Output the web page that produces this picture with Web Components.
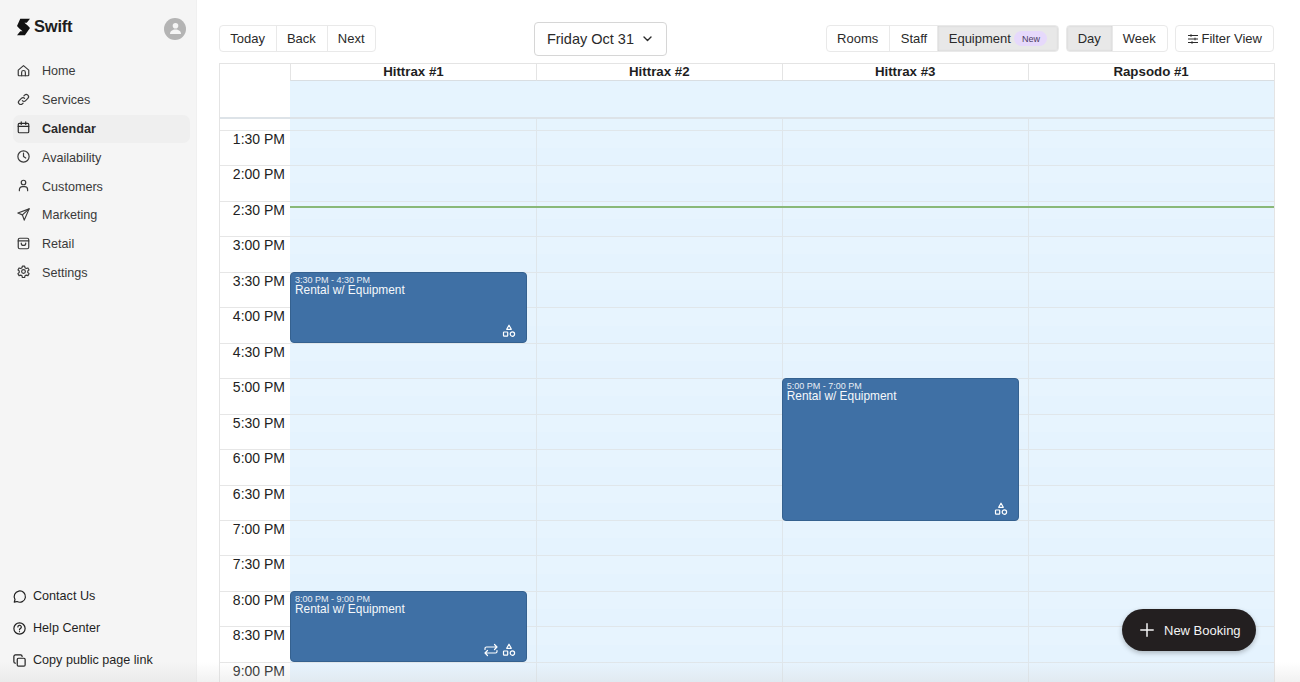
<!DOCTYPE html>
<html lang="en">
<head>
<meta charset="UTF-8">
<title>Swift Calendar</title>
<style>
html, body { margin: 0; height: 100%; overflow: hidden; background: #fff; }
body { font-family: "Liberation Sans", Arial, sans-serif; color: #222; }
</style>
</head>
<body>

<app-shell>
  <side-bar slot="side"></side-bar>
  <cal-toolbar slot="main"></cal-toolbar>
  <cal-grid slot="main"></cal-grid>
  <new-booking slot="fab"></new-booking>
</app-shell>

<script>
const stroke = 'fill="none" stroke="currentColor" stroke-width="1.6" stroke-linecap="round" stroke-linejoin="round"'

const navIcons = {
  home: `<path d="M3 9.5 10 3.5l7 6V16a1 1 0 0 1-1 1H4a1 1 0 0 1-1-1z"/><path d="M7.5 17v-4.5a2.5 2.5 0 0 1 5 0V17"/>`,
  link: `<path d="M8.5 11.5a3 3 0 0 0 4.3 0l3-3a3 3 0 0 0-4.3-4.3l-1 1"/><path d="M11.5 8.5a3 3 0 0 0-4.3 0l-3 3a3 3 0 0 0 4.3 4.3l1-1"/>`,
  calendar: `<rect x="3" y="4.5" width="14" height="12.5" rx="1.5"/><path d="M3 8.5h14M7 2.5v3.5M13 2.5v3.5"/>`,
  clock: `<circle cx="10" cy="10" r="7.5"/><path d="M10 5.5V10l3 2"/>`,
  person: `<circle cx="10" cy="6" r="3"/><path d="M4.5 17v-1.5a4 4 0 0 1 4-4h3a4 4 0 0 1 4 4V17"/>`,
  send: `<path d="M17.5 2.5 2.5 8l6 2.5 2.5 7z"/><path d="M17.5 2.5 8.5 10.5"/>`,
  bag: `<rect x="3" y="3" width="14" height="14" rx="2"/><path d="M3 6.5h14M7 9.5a3 3 0 0 0 6 0"/>`,
  gear: `<circle cx="10" cy="10" r="2.5"/><path d="M8.5 2.8h3l.5 2.2 1.7 1 2.2-.7 1.5 2.6-1.7 1.5v2l1.7 1.5-1.5 2.6-2.2-.7-1.7 1-.5 2.2h-3l-.5-2.2-1.7-1-2.2.7-1.5-2.6 1.7-1.5v-2L2.6 7.9l1.5-2.6 2.2.7 1.7-1z"/>`,
  chat: `<path d="M3 17.5l1-3.5a7.5 7.5 0 1 1 2.8 2.7z"/>`,
  help: `<circle cx="10" cy="10" r="7.5"/><path d="M7.8 8a2.3 2.3 0 1 1 3.4 2c-.8.5-1.2 1-1.2 1.8"/><path d="M10 14.2v.1"/>`,
  copy: `<rect x="7" y="7" width="10.5" height="10.5" rx="1.5"/><path d="M4.5 13.5A2 2 0 0 1 2.5 11.5V4.5a2 2 0 0 1 2-2h7a2 2 0 0 1 2 2"/>`
}

function icon(name, size) {
  return `<svg width="${size}" height="${size}" viewBox="0 0 20 20" ${stroke}>${navIcons[name]}</svg>`
}

class AppShell extends HTMLElement {
  constructor() {
    super()
    this.attachShadow({ mode: "open" })
    this.shadowRoot.innerHTML = `
      <style>
        :host { display: grid; grid-template-columns: 197px 1fr; height: 682px; position: relative; overflow: hidden; }
        main { padding: 22px 26px 0 22px; min-width: 0; overflow: hidden; }
        .fab { position: absolute; right: 44px; bottom: 31px; }
        .fade { position: absolute; left: 0; right: 0; bottom: 0; height: 20px; pointer-events: none;
                background: linear-gradient(rgba(225,225,225,0), rgba(215,215,215,.35)); }
      </style>
      <slot name="side"></slot>
      <main><slot name="main"></slot></main>
      <div class="fade"></div>
      <div class="fab"><slot name="fab"></slot></div>
    `
  }
}

class SideBar extends HTMLElement {
  constructor() {
    super()
    this.attachShadow({ mode: "open" })
    const items = [["home", "Home"], ["link", "Services"], ["calendar", "Calendar", true], ["clock", "Availability"],
      ["person", "Customers"], ["send", "Marketing"], ["bag", "Retail"], ["gear", "Settings"]]
    const bottom = [["chat", "Contact Us"], ["help", "Help Center"], ["copy", "Copy public page link"]]
    this.shadowRoot.innerHTML = `
      <style>
        :host { display: flex; flex-direction: column; background: #f5f5f5; height: 682px; box-sizing: border-box;
                border-right: 1px solid #f0f0f0; font-size: 12.6px; color: #3a3a3a; }
        .brand { display: flex; align-items: center; height: 57px; padding: 0 10px 0 17px; box-sizing: border-box; }
        .brand b { font-size: 16.5px; font-weight: 700; color: #1d1d1d; margin-left: 4px; letter-spacing: -.2px; position: relative; top: -2px; }
        .brand .logo { position: relative; top: -2px; }
        .avatar { margin-left: auto; width: 22px; height: 22px; border-radius: 50%; background: #b4b4b4; display: flex; align-items: center; justify-content: center; }
        nav { display: flex; flex-direction: column; gap: 1px; margin-top: .5px; padding: 0 6px 0 13px; }
        .item { display: flex; align-items: center; height: 27.8px; padding-left: 3px; border-radius: 7px; }
        .item svg { width: 15px; height: 15px; margin-right: 11px; position: relative; top: -1px; flex: none; }
        .item.on { background: #efefef; font-weight: 700; color: #2b2b2b; }
        .low { margin-top: auto; display: flex; flex-direction: column; gap: 14px; padding: 0 0 13px 12px; color: #1f1f1f; }
        .low div { display: flex; align-items: center; height: 18px; }
        .low svg { width: 15px; height: 15px; margin-right: 6px; flex: none; }
      </style>
      <div class="brand">
        <svg class="logo" width="13" height="18" viewBox="0 0 14 18"><path fill="#111" d="M3.5 0H14L10.5 4.5H8L11.5 7.5 14 10 8.5 18H0L3.5 13.5H6L2.5 10.5 0 8z"/></svg>
        <b>Swift</b>
        <span class="avatar"><svg width="13" height="13" viewBox="0 0 13 13"><circle cx="6.5" cy="3.8" r="2.8" fill="#f5f5f5"/><path fill="#f5f5f5" d="M1 12c0-3 2.5-4.5 5.5-4.5S12 9 12 12z"/></svg></span>
      </div>
      <nav>${items.map(([i, t, on]) => `<div class="item${on ? " on" : ""}">${icon(i, 15)}<span>${t}</span></div>`).join("")}</nav>
      <div class="low">${bottom.map(([i, t]) => `<div>${icon(i, 15)}<span>${t}</span></div>`).join("")}</div>
    `
  }
}

class BtnGroup extends HTMLElement {
  constructor() {
    super()
    this.attachShadow({ mode: "open" })
    this.shadowRoot.innerHTML = `
      <style>
        :host { display: inline-flex; height: 27px; box-sizing: border-box; border: 1px solid #e9e9e9; border-radius: 4px;
                font-size: 13px; color: #2a2a2a; overflow: hidden; background: #fff; }
      </style>
      <slot></slot>
    `
  }
}

class GroupBtn extends HTMLElement {
  constructor() {
    super()
    this.attachShadow({ mode: "open" })
    this.shadowRoot.innerHTML = `
      <style>
        :host { display: flex; align-items: center; padding: 0 var(--pad-r, 11px) 0 var(--pad-l, 10.5px); border-left: 1px solid #e9e9e9; white-space: nowrap; }
        :host(:first-child) { border-left: 0; }
        :host([active]) { background: #e8e8e8; box-shadow: inset 0 0 2px #c9c9c9; }
      </style>
      <slot></slot>
    `
  }
}

class CalToolbar extends HTMLElement {
  constructor() {
    super()
    this.attachShadow({ mode: "open" })
    this.shadowRoot.innerHTML = `
      <style>
        :host { display: flex; align-items: center; justify-content: space-between; height: 33px; margin-bottom: 8px; }
        .nav { --pad-l: 10.25px; --pad-r: 10.75px; }
        .right { display: flex; gap: 7px; align-items: center; }
        .date { display: flex; align-items: center; box-sizing: border-box; width: 133px; height: 34px; padding-left: 11.5px; border: 1.5px solid #d6d6d6; border-radius: 4px;
                font-size: 14.5px; color: #2a2a2a; }
        .date svg { margin-left: 8px; }
        .new { background: #e6d9fb; color: #4a3a63; font-size: 9px; padding: 2.5px 7.5px; border-radius: 8px; margin-left: 3.5px; }
        .staff { --pad-r: 10px; }
        .day { --pad-l: 10.25px; --pad-r: 10.75px; }
        .filter { margin-left: .5px; }
        .filter svg { margin-right: 3px; }
      </style>
      <btn-group class="nav"><group-btn>Today</group-btn><group-btn>Back</group-btn><group-btn>Next</group-btn></btn-group>
      <div class="date">Friday Oct 31 <svg width="11" height="11" viewBox="0 0 11 11" fill="none" stroke="#2a2a2a" stroke-width="1.4" stroke-linecap="round" stroke-linejoin="round"><path d="M2 4l3.5 3.5L9 4"/></svg></div>
      <div class="right">
        <btn-group><group-btn>Rooms</group-btn><group-btn class="staff">Staff</group-btn><group-btn active>Equipment<span class="new">New</span></group-btn></btn-group>
        <btn-group class="day"><group-btn active>Day</group-btn><group-btn>Week</group-btn></btn-group>
        <btn-group class="filter"><group-btn><svg width="12" height="12" viewBox="0 0 12 12" fill="none" stroke="#2a2a2a" stroke-width="1"><path d="M1 2.5h10M1 6h10M1 9.5h10M4 1.2v2.6M8 4.7v2.6M5 8.2v2.6"/></svg>Filter View</group-btn></btn-group>
      </div>
    `
  }
}

class CalEvent extends HTMLElement {
  constructor() {
    super()
    this.attachShadow({ mode: "open" })
    const shapes = `<svg width="14" height="14" viewBox="0 0 14 14" fill="none" stroke="#fff" stroke-width="1.2" stroke-linejoin="round"><path d="M7 1.2 9.3 5.3H4.7z"/><rect x="1.5" y="8" width="4.2" height="4.2" rx=".6"/><circle cx="10.4" cy="10.1" r="2.2"/></svg>`
    const repeat = `<svg width="14" height="14" viewBox="0 0 14 14" fill="none" stroke="#fff" stroke-width="1.2" stroke-linecap="round" stroke-linejoin="round"><path d="M1 6.5v-1A1.5 1.5 0 0 1 2.5 4H13M10.5 1.5 13 4l-2.5 2.5M13 7.5v1a1.500 1.500 0 0 1-1.500 1.500H1M3.500 7.500 1 10l2.500 2.500"/></svg>`
    this.shadowRoot.innerHTML = `
      <style>
        :host { display: block; position: absolute; left: 0; right: 9px; box-sizing: border-box; background: #3f70a5; border: 1px solid #35618f;
                border-radius: 4px; color: #fff; padding: 2px 4px; overflow: hidden; }
        .time { font-size: 9px; line-height: 10px; color: #e8eef5; }
        .title { font-size: 11.9px; line-height: 11px; color: #f6f8fb; }
        .icons { position: absolute; right: 10px; bottom: 4px; display: flex; gap: 4px; }
      </style>
      <div class="time">${this.getAttribute("time")}</div>
      <div class="title">${this.getAttribute("label")}</div>
      <div class="icons">${this.hasAttribute("repeat") ? repeat : ""}${shapes}</div>
    `
  }
}

class CalGrid extends HTMLElement {
  constructor() {
    super()
    this.attachShadow({ mode: "open" })
    const times = ["1:30 PM", "2:00 PM", "2:30 PM", "3:00 PM", "3:30 PM", "4:00 PM", "4:30 PM", "5:00 PM", "5:30 PM", "6:00 PM", "6:30 PM", "7:00 PM", "7:30 PM", "8:00 PM", "8:30 PM", "9:00 PM"]
    const cols = ["Hittrax #1", "Hittrax #2", "Hittrax #3", "Rapsodo #1"]
    const ev = {
      0: [[4, 2, "3:30 PM - 4:30 PM", false], [13, 2, "8:00 PM - 9:00 PM", true]],
      2: [[7, 4, "5:00 PM - 7:00 PM", false]]
    }
    const row = 35.46
    const top = 11
    this.shadowRoot.innerHTML = `
      <style>
        :host { display: block; box-sizing: border-box; width: 1055.5px; border: 1px solid #e4e4e4; border-bottom: 0; height: 620px; position: relative; overflow: hidden; }
        .head { display: grid; grid-template-columns: 70px repeat(4, 1fr); height: 17px; font-size: 13.3px; font-weight: 700; color: #1f1f1f; text-align: center; line-height: 16px; }
        .head div { border-left: 1px solid #e4e4e4; border-bottom: 1px solid #d9dee2; box-sizing: border-box; }
        .head div:first-child { border: 0; }
        .allday { display: grid; grid-template-columns: 70px 1fr; height: 36px; border-bottom: 2px solid #dde3e8; }
        .allday div:last-child { background: #e6f4fe; }
        .body { display: grid; grid-template-columns: 70px repeat(4, 1fr); }
        .gutter { background: #fff; padding-top: ${top}px; }
        .gutter div { height: ${row}px; box-sizing: border-box; border-top: 1px solid #e6e6e6; text-align: right; padding-right: 5px; font-size: 14px; line-height: 17px; color: #222; }
        .col { position: relative; border-left: 1px solid #dfe6eb; box-sizing: border-box; padding-top: ${top}px; height: 600px; background: #e6f4fe; }
        .col:nth-child(2) { border-left: 0; }
        .col .slot { height: ${row}px; box-sizing: border-box; border-top: 1px solid #e0e6ea; background: linear-gradient(#e7f4fe 50%, #e5f3fe 50%); }
        .now { position: absolute; left: 70px; right: 0; top: 142px; height: 2px; background: #8ab878; z-index: 2; }
      </style>
      <div class="head"><div></div>${cols.map(c => `<div>${c}</div>`).join("")}</div>
      <div class="allday"><div></div><div></div></div>
      <div class="body">
        <div class="gutter">${times.map(t => `<div>${t}</div>`).join("")}</div>
        ${cols.map((c, i) => `<div class="col">${times.map(() => `<div class="slot"></div>`).join("")}
          ${(ev[i] || []).map(([r, span, time, rep]) => `<cal-event time="${time}" label="Rental w/ Equipment"${rep ? " repeat" : ""} style="left:${i ? -1 : 0}px;top:${top + r * row}px;height:${span * row + .5}px"></cal-event>`).join("")}
        </div>`).join("")}
      </div>
      <div class="now"></div>
    `
  }
}

class NewBooking extends HTMLElement {
  constructor() {
    super()
    this.attachShadow({ mode: "open" })
    this.shadowRoot.innerHTML = `
      <style>
        :host { display: flex; align-items: center; width: 134px; height: 42px; box-sizing: border-box; padding-left: 18px; border-radius: 21px; background: #231f20;
                color: #f4f4f4; font-size: 13px; box-shadow: 0 2px 5px rgba(0,0,0,.25); }
        svg { margin-right: 10px; }
      </style>
      <svg width="14" height="14" viewBox="0 0 14 14" fill="none" stroke="#f4f4f4" stroke-width="1.5" stroke-linecap="round"><path d="M7 .8v12.4M.8 7h12.4"/></svg>
      New Booking
    `
  }
}

customElements.define("btn-group", BtnGroup)
customElements.define("group-btn", GroupBtn)
customElements.define("cal-event", CalEvent)
customElements.define("cal-toolbar", CalToolbar)
customElements.define("cal-grid", CalGrid)
customElements.define("side-bar", SideBar)
customElements.define("new-booking", NewBooking)
customElements.define("app-shell", AppShell)
</script>
</body>
</html>
